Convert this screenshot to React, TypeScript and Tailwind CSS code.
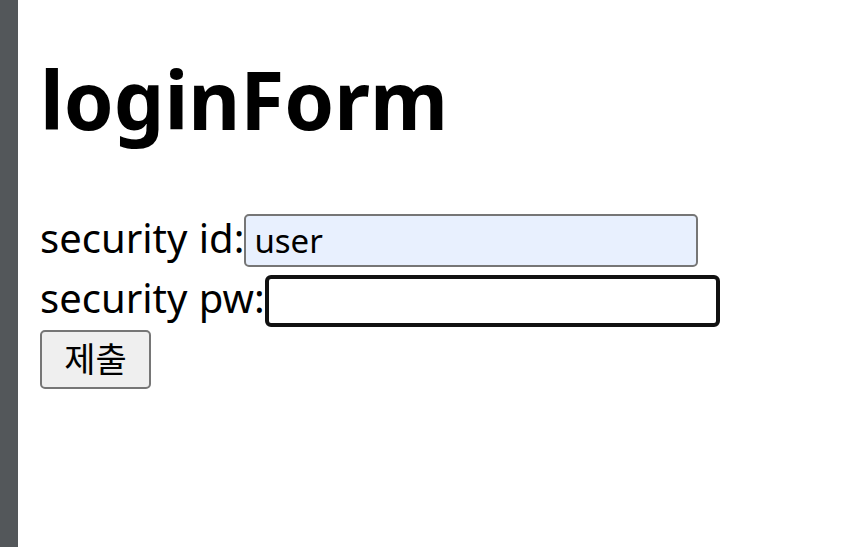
import React from 'react';

const font = { fontFamily: '"Noto Sans", "Noto Sans CJK KR", sans-serif' };

export default function App() {
  return (
    <div className="flex min-h-screen bg-white text-black" style={font}>
      {/* left strip */}
      <div className="w-[18px] shrink-0 bg-[#53575a]" />

      <main className="pl-[22px]">
        <h1 className="mt-[44px] text-[80px] font-bold leading-[109px]">loginForm</h1>

        <form className="mt-[58px] flex flex-col items-start" onSubmit={(e) => e.preventDefault()}>
          <div className="flex items-baseline">
            <label className="text-[40px] leading-[53px] [word-spacing:1px]">security id:</label>
            <input
              defaultValue="user"
              className="h-[53px] w-[454px] rounded-[5px] border-2 border-[#767676] bg-[#e8f0fe] px-[8px] text-[33px] outline-none"
              style={font}
            />
          </div>
          <div className="mt-[5px] flex items-baseline">
            <label className="text-[40px] leading-[52px] [word-spacing:1px]">security pw:</label>
            <input
              type="password"
              className="h-[52px] w-[455px] rounded-[6px] border-[4px] border-[#111111] bg-white px-[8px] text-[33px] outline-none"
              style={font}
            />
          </div>
          <button
            type="submit"
            className="mt-[3px] h-[59px] w-[111px] rounded-[5px] border-2 border-[#767676] bg-[#efefef] text-[34px]"
            style={font}
          >
            제출
          </button>
        </form>
      </main>
    </div>
  );
}
